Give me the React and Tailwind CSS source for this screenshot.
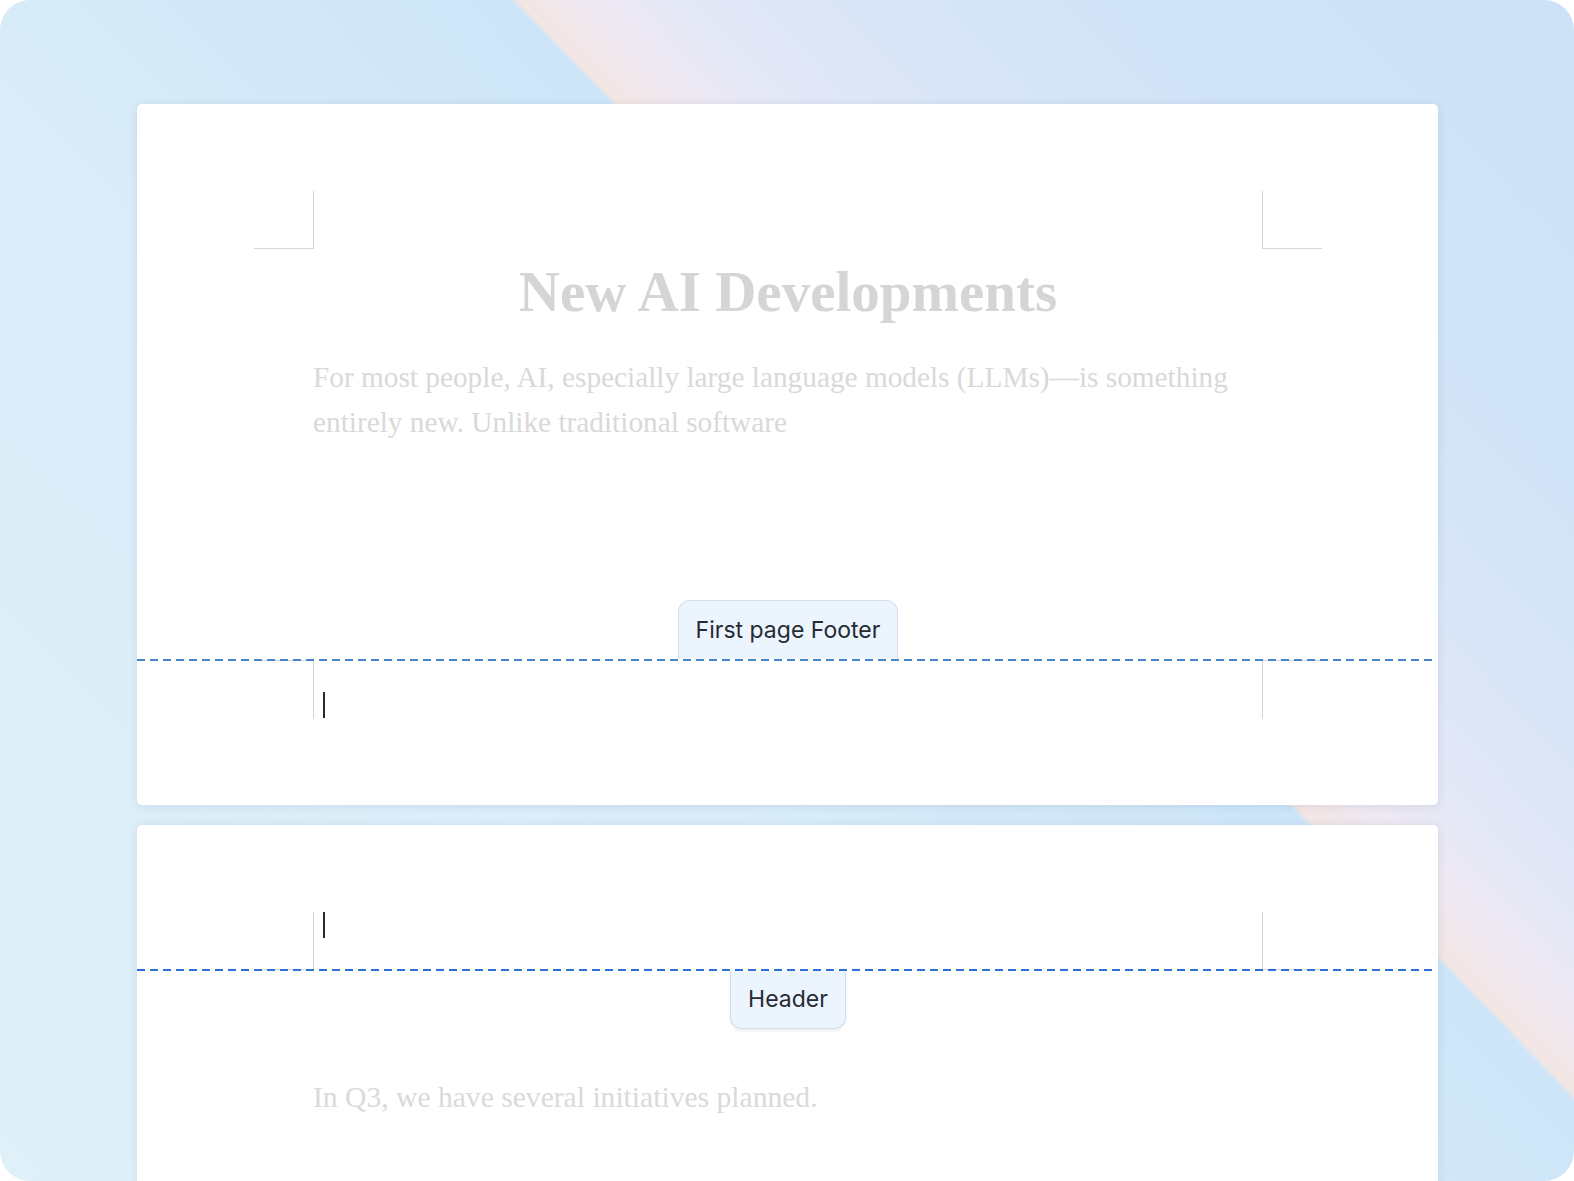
export default function App() {
  const serif = "font-['Liberation_Serif','Times_New_Roman',serif]";
  const sans = "font-['Inter','Noto_Sans',sans-serif]";
  return (
    <div className="w-[1574px] h-[1181px] overflow-hidden rounded-[30px] bg-[linear-gradient(46deg,#e0f0f9_0%,#d9ecf8_40%,#cde5f8_60.8%,#f3e6e3_61.1%,#efe8f2_63.5%,#e4e8f7_67%,#d8e5f7_74%,#d0e3f7_84%,#cde2f6_100%)] pt-[104px] pl-[137px] flex flex-col items-start gap-[20px]">
      {/* Page 1 */}
      <div className="w-[1301px] h-[701px] shrink-0 bg-white rounded-[5px] shadow-[0_1px_8px_rgba(40,70,110,0.12)] pl-[176px] pr-[175px] pt-[87px] flex flex-col">
        <div className="h-[58px] flex justify-between -mx-[59px] shrink-0">
          <div className="w-[60px] h-full border-r border-b border-[#d6d6d6]" />
          <div className="w-[60px] h-full border-l border-b border-[#d6d6d6]" />
        </div>
        <div className="h-[410px] flex flex-col shrink-0">
          <h1 className={`${serif} mt-[9px] text-center text-[57px] leading-[68px] font-bold text-[#d5d5d5]`}>
            New AI Developments
          </h1>
          <p className={`${serif} mt-[29px] text-[29.3px] leading-[45px] text-[#d9d9d9]`}>
            For most people, AI, especially large language models (LLMs)—is something entirely new. Unlike traditional software
          </p>
          <div className={`${sans} mt-auto self-center h-[59px] px-[17px] flex items-center rounded-t-[12px] border border-b-0 border-[#d3dce8] bg-[#ecf4fe] text-[23px] text-[#262b33]`}>
            First page Footer
          </div>
        </div>
        <div className="relative z-10 h-[2px] -ml-[176px] -mr-[170px] shrink-0 bg-[repeating-linear-gradient(90deg,#4886cc_0px,#4886cc_8px,transparent_8px,transparent_13px)]" />
        <div className="h-[59px] -mt-[1px] flex -mx-[59px] shrink-0">
          <div className="w-[60px] h-full border-r border-t border-[#d6d6d6]" />
          <div className="flex-1">
            <div className="ml-[9px] mt-[32px] w-[2px] h-[26px] bg-[#2a2a2a]" />
          </div>
          <div className="w-[60px] h-full border-l border-t border-[#d6d6d6]" />
        </div>
      </div>

      {/* Page 2 */}
      <div className="w-[1301px] h-[420px] shrink-0 bg-white rounded-[5px] shadow-[0_1px_8px_rgba(40,70,110,0.12)] pl-[176px] pr-[175px] pt-[87px] flex flex-col">
        <div className="h-[58px] flex -mx-[59px] shrink-0">
          <div className="w-[60px] h-full border-r border-b border-[#d6d6d6]" />
          <div className="flex-1">
            <div className="ml-[9px] w-[2px] h-[26px] bg-[#2a2a2a]" />
          </div>
          <div className="w-[60px] h-full border-l border-b border-[#d6d6d6]" />
        </div>
        <div className="relative z-10 h-[2px] -mt-[1px] -ml-[176px] -mr-[170px] shrink-0 bg-[repeating-linear-gradient(90deg,#2c70d8_0px,#2c70d8_8px,transparent_8px,transparent_13px)]" />
        <div className={`${sans} self-center h-[58px] px-[17px] flex items-center rounded-b-[12px] border border-t-0 border-[#d3dce8] bg-[#ecf4fe] shadow-[0_2px_3px_rgba(40,70,110,0.08)] text-[23px] text-[#262b33]`}>
          Header
        </div>
        <p className={`${serif} mt-[46px] text-[29.6px] leading-[45px] text-[#dadada]`}>
          In Q3, we have several initiatives planned.
        </p>
      </div>
    </div>
  );
}
